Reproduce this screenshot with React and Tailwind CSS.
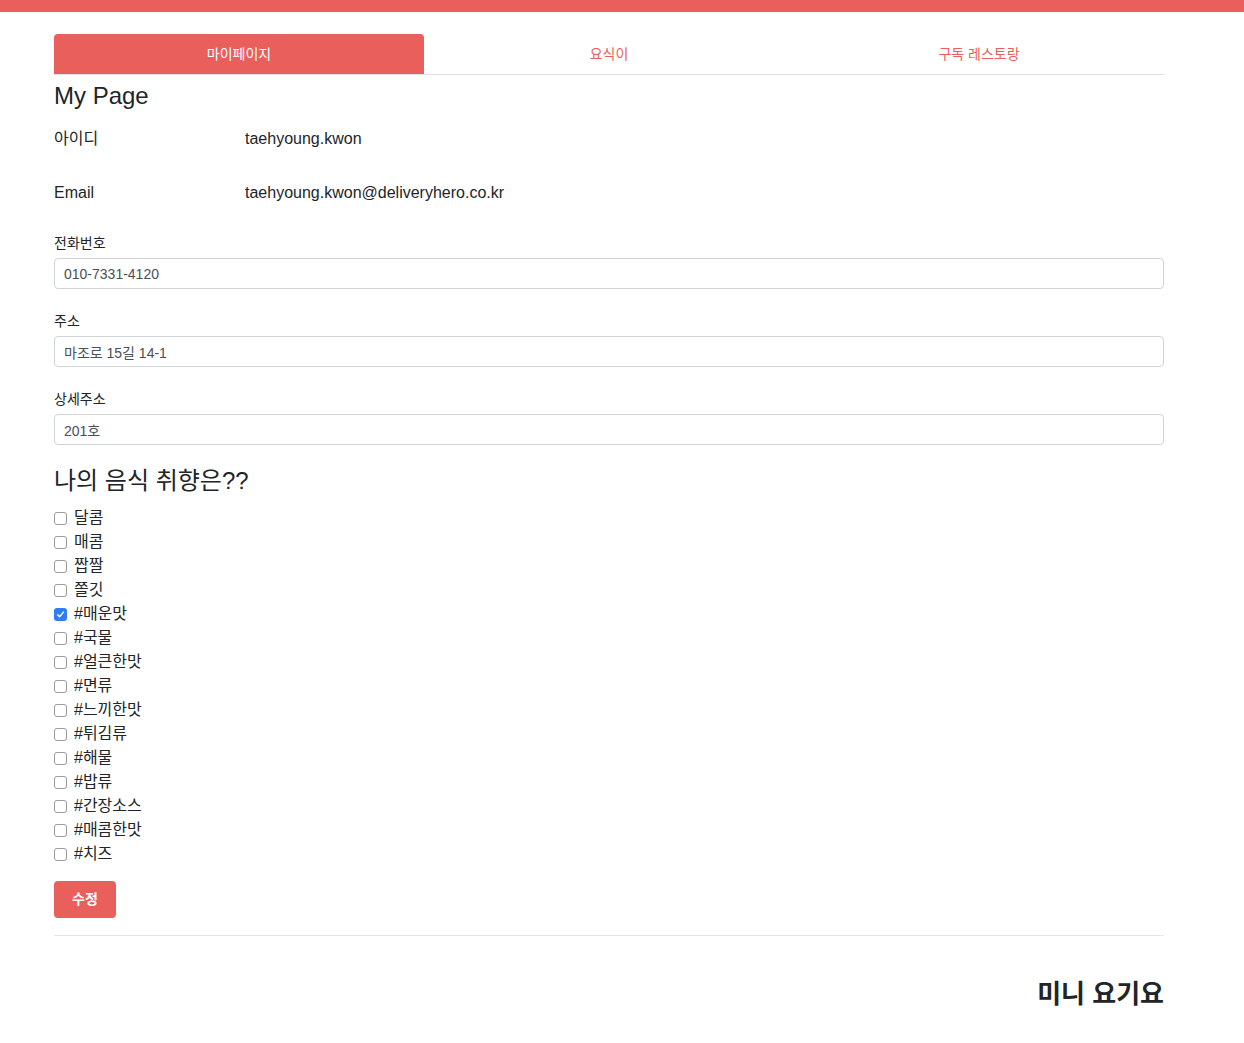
import React, { useState } from 'react';

const FONT = { fontFamily: '"Liberation Sans", "Noto Sans CJK KR", sans-serif' };

const TABS = ['마이페이지', '요식이', '구독 레스토랑'];

const TASTES = [
  '달콤', '매콤', '짭짤', '쫄깃', '#매운맛', '#국물', '#얼큰한맛', '#면류',
  '#느끼한맛', '#튀김류', '#해물', '#밥류', '#간장소스', '#매콤한맛', '#치즈',
];

const Field = ({ label, value }) => (
  <div className="mb-[22px]">
    <label className="block h-5 leading-5 text-[14px] mb-[5px]">{label}</label>
    <input
      defaultValue={value}
      className="w-full h-[31px] px-[9px] text-[14px] text-[#495057] border border-[#ced4da] rounded-[4px] outline-none"
    />
  </div>
);

const Check = ({ label, checked, onToggle }) => (
  <div className="flex items-center h-6 cursor-pointer" onClick={onToggle}>
    {checked ? (
      <span className="w-[13px] h-[13px] rounded-[3px] bg-[#2f7cf6] flex items-center justify-center">
        <svg width="9" height="9" viewBox="0 0 10 10" fill="none">
          <path d="M1.8 5.3 L4 7.5 L8.3 2.3" stroke="white" strokeWidth="1.5" strokeLinecap="round" strokeLinejoin="round" />
        </svg>
      </span>
    ) : (
      <span className="w-[13px] h-[13px] rounded-[3px] border border-[#9a9a9a] bg-white" />
    )}
    <span className="ml-[7px] text-[16px]">{label}</span>
  </div>
);

const App = () => {
  const [tab, setTab] = useState(0);
  const [checked, setChecked] = useState({ '#매운맛': true });

  return (
    <div className="min-h-screen bg-white text-[#212529]" style={FONT}>
      <div className="h-3 bg-[#e95f5c]" />

      <div className="w-[1110px] ml-[54px]">
        {/* TABS */}
        <div className="mt-[22px] flex border-b border-[#dee2e6]">
          {TABS.map((t, i) => (
            <button
              key={t}
              onClick={() => setTab(i)}
              className={
                'flex-1 h-10 text-[14px] rounded-t-[4px] ' +
                (tab === i ? 'bg-[#e95f5c] text-white' : 'text-[#e95f5c]')
              }
            >
              {t}
            </button>
          ))}
        </div>

        {/* MY PAGE */}
        <h4 className="pt-[6px] mb-[10px] text-[24px] leading-[29px]">My Page</h4>

        <div className="flex items-center h-[38px] mb-4 text-[16px]">
          <div className="w-[191px]">아이디</div>
          <div>taehyoung.kwon</div>
        </div>
        <div className="flex items-center h-[38px] text-[16px]">
          <div className="w-[191px]">Email</div>
          <div>taehyoung.kwon@deliveryhero.co.kr</div>
        </div>

        <div className="mt-[21px]">
          <Field label="전화번호" value="010-7331-4120" />
          <Field label="주소" value="마조로 15길 14-1" />
          <Field label="상세주소" value="201호" />
        </div>

        <h4 className="text-[24px] leading-[29px] -mt-[1px] mb-[11px]">나의 음식 취향은??</h4>

        <div>
          {TASTES.map((t) => (
            <Check
              key={t}
              label={t}
              checked={!!checked[t]}
              onToggle={() => setChecked({ ...checked, [t]: !checked[t] })}
            />
          ))}
        </div>

        <button className="mt-[15px] h-[37px] px-[18px] rounded-[4px] bg-[#e95f5c] text-white text-[14px] font-bold">
          수정
        </button>

        <hr className="mt-[17px] border-[#e5e5e5]" />

        <div className="mt-[41px] text-right text-[26px] leading-[34px] font-bold pb-8">미니 요기요</div>
      </div>
    </div>
  );
};

export default App;
